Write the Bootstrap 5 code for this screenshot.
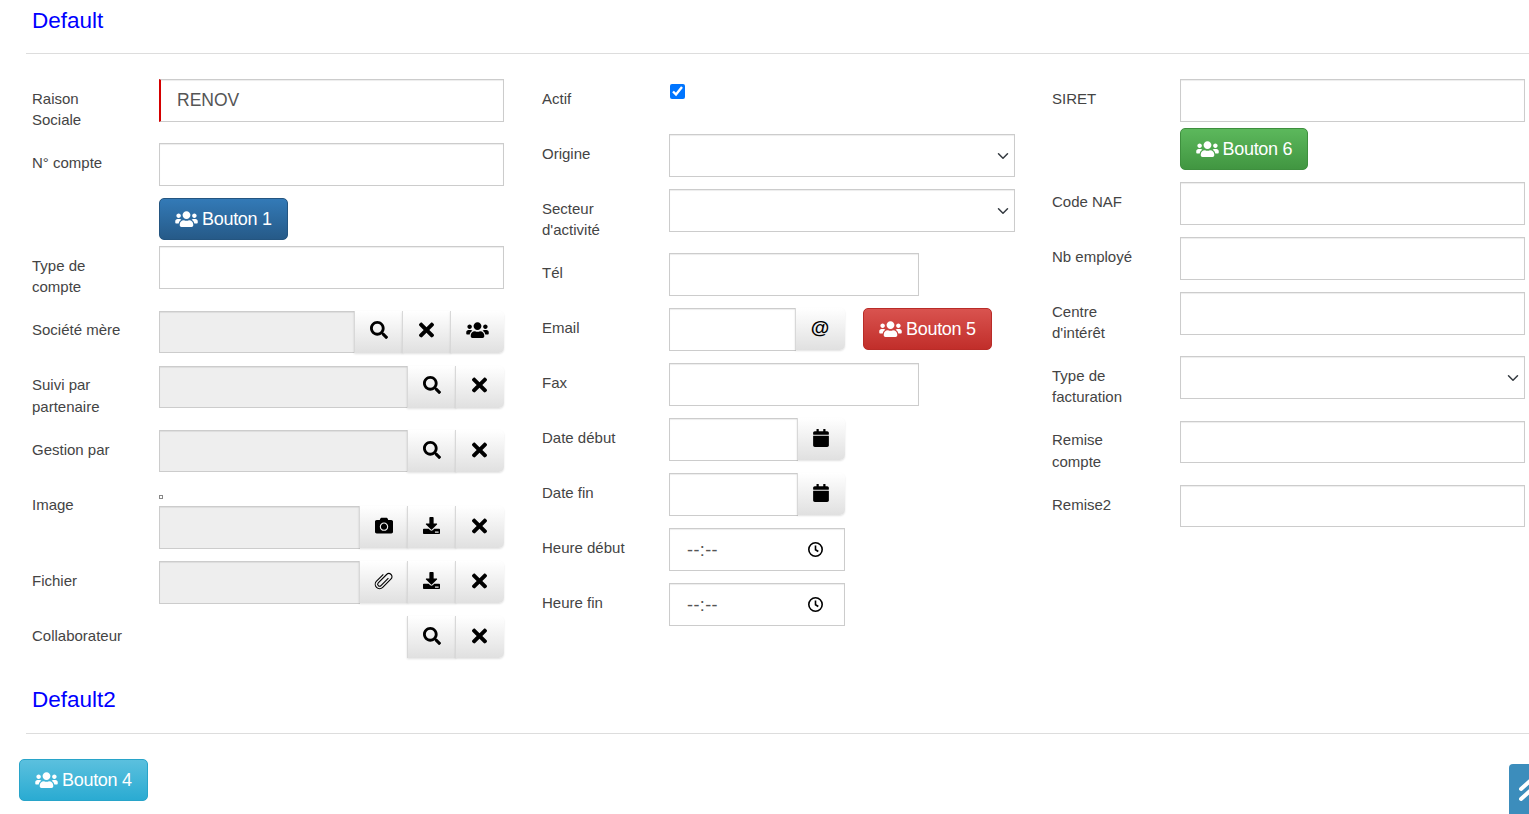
<!DOCTYPE html>
<html lang="fr">
<head>
<meta charset="utf-8">
<title>Default</title>
<link href="https://cdn.jsdelivr.net/npm/bootstrap@5.3.0/dist/css/bootstrap.min.css" rel="stylesheet">
<style>
html,body{height:814px;overflow:hidden;background:#fff}
body{font-family:"Liberation Sans",Arial,sans-serif;font-size:15px;color:#444}
.sec-head{height:54px;margin-left:26px;padding-left:6px;border-bottom:1px solid #ddd;color:#00f;font-size:22.5px;line-height:42px}
.sec-two{height:54px;line-height:40px}
.form-grid{display:grid;grid-template-columns:repeat(3,510px);padding:25px 0 0 32px;height:626px}
.fld{display:grid;grid-template-columns:127px 345px;margin-bottom:12px;min-height:43px}
.col-mid .fld{grid-template-columns:127px 346px}
.col-end .fld{grid-template-columns:128px 345px}
.fld-lbl{padding-top:8.6px;margin-bottom:.94px;line-height:21.43px;width:94px;white-space:normal}
.fld-lbl.no-wrap{white-space:nowrap}
.fld-ctl{min-width:0}
.txt-in{height:43px;border:1px solid #ccc;border-radius:0;box-shadow:inset 0 1px 1px rgba(0,0,0,.075);padding:6px 16px;font-size:17.5px;color:#555;background-color:#fff;font-family:"Liberation Sans",Arial,sans-serif}
.txt-in.req{border-left:2px solid #d40000}
.txt-in.ro,.txt-in.ro:read-only{background:#eee}
.txt-in.low{height:42px}
.w-tel{width:250px}
.input-group>.w-mail{width:127px;flex:none}
.input-group>.w-date{width:129px;flex:none}
.form-select.txt-in{background-position:right 3px center;background-size:16px 12px}
.add-on{width:49px;height:42px;padding:0 1px 3px 0;flex:none;display:flex;align-items:center;justify-content:center;border:0;border-left:1px solid #d8d8d8;border-radius:0;background:linear-gradient(#fff,#e0e0e0);box-shadow:0 1px 2px rgba(0,0,0,.12);color:#000}
.add-on:last-child{border-top-right-radius:5px;border-bottom-right-radius:5px}
.add-on.wide{width:54px}
.add-on.w50{width:50px}
.add-on.w48{width:48px}
.add-on svg{display:block;fill:#000}
.add-on svg.clip-i{fill:none;stroke:#000;stroke-width:1.25}
.at-glyph{font-size:19px;font-weight:700;line-height:1}
.act-btn{height:42px;padding:0 15px;display:inline-flex;flex:none;white-space:nowrap;align-items:center;gap:4px;font-size:18px;letter-spacing:-.3px;color:#fff;border-radius:5px;border:1px solid}
.act-btn:hover{color:#fff}
.act-btn svg{fill:#fff;display:block}
.g-blue{background:linear-gradient(#337ab7,#265a88);border-color:#245580}
.g-red{background:linear-gradient(#d9534f,#c12e2a);border-color:#b92c28}
.g-green{background:linear-gradient(#5cb85c,#419641);border-color:#3e8f3e;padding:0 14.5px}
.g-cyan{background:linear-gradient(#5bc0de,#2aabd2);border-color:#28a4c9}
.btn-gap{margin-top:12px}
.btn-gap-s{margin-top:6px}
.under-blue{margin-bottom:6px}
.mail-row{gap:18px}
.chk{appearance:auto;-webkit-appearance:auto;accent-color:#0075ff;width:15px;height:15px;margin:5px 0 0 1px;border:0;background:none}
.chk:checked{background:none}
.img-dot{display:block;width:4px;height:4px;border:1px solid #888;margin:10px 0 7px}
.time-in{display:flex;align-items:center;justify-content:space-between;width:176px;font-size:18px;letter-spacing:.4px;padding:2px 20px 0 17px}
.time-in svg{fill:none;stroke:#000;stroke-width:1.6;display:block;margin-top:-3px}
.foot-bar{padding:25px 0 0 19px}
.top-tab{position:fixed;left:1509px;top:764px;width:40px;height:50px;background:#3c8dbc;border-top-left-radius:4px}
.top-tab svg{display:block;margin:15px 0 0 10px;stroke:#fff;stroke-width:4;stroke-linecap:round;fill:none}
</style>
</head>
<body>
<svg class="d-none" xmlns="http://www.w3.org/2000/svg">
<symbol id="i-users" viewBox="0 0 640 512"><path d="M96 224c35.3 0 64-28.7 64-64s-28.7-64-64-64-64 28.7-64 64 28.7 64 64 64zm448 0c35.3 0 64-28.7 64-64s-28.7-64-64-64-64 28.7-64 64 28.7 64 64 64zm32 32h-64c-17.6 0-33.5 7.1-45.1 18.6 40.3 22.1 68.9 62 75.1 109.4h66c17.7 0 32-14.3 32-32v-32c0-35.3-28.7-64-64-64zm-256 0c61.9 0 112-50.1 112-112S381.9 32 320 32 208 82.1 208 144s50.1 112 112 112zm76.8 32h-8.3c-20.8 10-43.9 16-68.5 16s-47.6-6-68.5-16h-8.3C179.6 288 128 339.6 128 403.2V432c0 26.5 21.5 48 48 48h288c26.5 0 48-21.5 48-48v-28.8c0-63.6-51.6-115.2-115.2-115.2zm-223.7-13.4C161.5 263.1 145.6 256 128 256H64c-35.3 0-64 28.7-64 64v32c0 17.7 14.3 32 32 32h65.9c6.3-47.4 34.9-87.3 75.2-109.4z"/></symbol>
<symbol id="i-search" viewBox="0 0 512 512"><path d="M505 442.7L405.3 343c-4.5-4.5-10.6-7-17-7H372c27.6-35.3 44-79.7 44-128C416 93.1 322.9 0 208 0S0 93.1 0 208s93.1 208 208 208c48.3 0 92.7-16.4 128-44v16.3c0 6.4 2.5 12.5 7 17l99.7 99.7c9.4 9.4 24.6 9.4 33.9 0l28.3-28.3c9.4-9.4 9.4-24.6.1-34zM208 336c-70.7 0-128-57.2-128-128 0-70.7 57.2-128 128-128 70.7 0 128 57.2 128 128 0 70.7-57.2 128-128 128z"/></symbol>
<symbol id="i-times" viewBox="0 0 352 512"><path d="M242.72 256l100.07-100.07c12.28-12.28 12.28-32.19 0-44.48l-22.24-22.24c-12.28-12.28-32.19-12.28-44.48 0L176 189.28 75.93 89.21c-12.28-12.28-32.19-12.28-44.48 0L9.21 111.45c-12.28 12.28-12.28 32.19 0 44.48L109.28 256 9.21 356.07c-12.28 12.28-12.28 32.19 0 44.48l22.24 22.24c12.28 12.28 32.2 12.28 44.48 0L176 322.72l100.07 100.07c12.28 12.28 32.2 12.28 44.48 0l22.24-22.24c12.28-12.28 12.28-32.19 0-44.48L242.72 256z"/></symbol>
<symbol id="i-down" viewBox="0 0 512 512"><path fill-rule="evenodd" d="M216 0h80c13.3 0 24 10.7 24 24v168h87.7c17.8 0 26.7 21.5 14.1 34.1L269.7 378.3c-7.5 7.5-19.8 7.5-27.3 0L90.1 226.1c-12.6-12.6-3.7-34.1 14.1-34.1H192V24c0-13.3 10.7-24 24-24zM512 376v112c0 13.3-10.7 24-24 24H24c-13.3 0-24-10.7-24-24V376c0-13.3 10.7-24 24-24h146.7l49 49c20.1 20.1 52.5 20.1 72.6 0l49-49H488c13.3 0 24 10.7 24 24zM360 440v32h110v-32z"/></symbol>
<symbol id="i-cam" viewBox="0 14 512 512"><path d="M512 144v288c0 26.5-21.5 48-48 48H48c-26.5 0-48-21.5-48-48V144c0-26.5 21.5-48 48-48h88l12.3-32.9c7-18.7 24.9-31.1 44.9-31.1h125.5c20 0 37.9 12.4 44.9 31.1L376 96h88c26.5 0 48 21.5 48 48zM376 288c0-66.2-53.8-120-120-120s-120 53.8-120 120 53.8 120 120 120 120-53.8 120-120zm-32 0c0 48.5-39.5 88-88 88s-88-39.5-88-88 39.5-88 88-88 88 39.5 88 88z"/><circle cx="256" cy="288" r="48"/></symbol>
<symbol id="i-clip" viewBox="-2 0 24 24"><path transform="rotate(45 9.8 12)" d="M12 6v12a2.2 2.2 0 0 1-4.4 0V4.5a3.6 3.6 0 0 1 7.2 0v13.5a5 5 0 0 1-10 0V7"/></symbol>
<symbol id="i-cal" viewBox="0 0 448 512"><path d="M12 192h424c6.6 0 12 5.4 12 12v260c0 26.5-21.5 48-48 48H48c-26.5 0-48-21.5-48-48V204c0-6.6 5.4-12 12-12zm436-44v-36c0-26.5-21.5-48-48-48h-48V12c0-6.6-5.4-12-12-12h-40c-6.6 0-12 5.4-12 12v52H160V12c0-6.6-5.4-12-12-12h-40c-6.6 0-12 5.4-12 12v52H48C21.5 64 0 85.5 0 112v36c0 6.6 5.4 12 12 12h424c6.6 0 12-5.4 12-12z"/></symbol>
</svg>

<div class="sec-head">Default</div>

<div class="form-grid">
  <div class="col-start">
    <div class="fld"><label class="fld-lbl">Raison Sociale</label><div class="fld-ctl"><input class="form-control txt-in req" value="RENOV"></div></div>
    <div class="fld under-blue"><label class="fld-lbl">N° compte</label><div class="fld-ctl"><input class="form-control txt-in">
      <a class="btn act-btn g-blue btn-gap" href="#"><svg width="23" height="18"><use href="#i-users"/></svg>Bouton 1</a></div></div>
    <div class="fld"><label class="fld-lbl">Type de compte</label><div class="fld-ctl"><input class="form-control txt-in"></div></div>
    <div class="fld"><label class="fld-lbl">Société mère</label><div class="fld-ctl"><div class="input-group flex-nowrap"><input class="form-control txt-in ro low" readonly><button class="btn add-on"><svg width="18" height="18"><use href="#i-search"/></svg></button><button class="btn add-on"><svg width="15" height="22"><use href="#i-times"/></svg></button><button class="btn add-on wide"><svg width="23" height="18"><use href="#i-users"/></svg></button></div></div></div>
    <div class="fld"><label class="fld-lbl">Suivi par partenaire</label><div class="fld-ctl"><div class="input-group flex-nowrap"><input class="form-control txt-in ro low" readonly><button class="btn add-on"><svg width="18" height="18"><use href="#i-search"/></svg></button><button class="btn add-on"><svg width="15" height="22"><use href="#i-times"/></svg></button></div></div></div>
    <div class="fld"><label class="fld-lbl">Gestion par</label><div class="fld-ctl"><div class="input-group flex-nowrap"><input class="form-control txt-in ro low" readonly><button class="btn add-on"><svg width="18" height="18"><use href="#i-search"/></svg></button><button class="btn add-on"><svg width="15" height="22"><use href="#i-times"/></svg></button></div></div></div>
    <div class="fld"><label class="fld-lbl">Image</label><div class="fld-ctl"><span class="img-dot"></span><div class="input-group flex-nowrap"><input class="form-control txt-in ro" readonly><button class="btn add-on"><svg width="18" height="18"><use href="#i-cam"/></svg></button><button class="btn add-on"><svg width="17" height="17"><use href="#i-down"/></svg></button><button class="btn add-on"><svg width="15" height="22"><use href="#i-times"/></svg></button></div></div></div>
    <div class="fld"><label class="fld-lbl">Fichier</label><div class="fld-ctl"><div class="input-group flex-nowrap"><input class="form-control txt-in ro" readonly><button class="btn add-on"><svg class="clip-i" width="21" height="21"><use href="#i-clip"/></svg></button><button class="btn add-on"><svg width="17" height="17"><use href="#i-down"/></svg></button><button class="btn add-on"><svg width="15" height="22"><use href="#i-times"/></svg></button></div></div></div>
    <div class="fld"><label class="fld-lbl no-wrap">Collaborateur</label><div class="fld-ctl"><div class="input-group flex-nowrap justify-content-end"><button class="btn add-on"><svg width="18" height="18"><use href="#i-search"/></svg></button><button class="btn add-on"><svg width="15" height="22"><use href="#i-times"/></svg></button></div></div></div>
  </div>

  <div class="col-mid">
    <div class="fld"><label class="fld-lbl">Actif</label><div class="fld-ctl"><input class="form-check-input chk" type="checkbox" checked></div></div>
    <div class="fld"><label class="fld-lbl">Origine</label><div class="fld-ctl"><select class="form-select txt-in"><option></option></select></div></div>
    <div class="fld"><label class="fld-lbl">Secteur d'activité</label><div class="fld-ctl"><select class="form-select txt-in"><option></option></select></div></div>
    <div class="fld"><label class="fld-lbl">Tél</label><div class="fld-ctl"><input class="form-control txt-in w-tel"></div></div>
    <div class="fld"><label class="fld-lbl">Email</label><div class="fld-ctl d-flex align-items-start mail-row"><div class="input-group flex-nowrap w-auto"><input class="form-control txt-in w-mail"><button class="btn add-on w50"><span class="at-glyph">@</span></button></div><a class="btn act-btn g-red" href="#"><svg width="23" height="18"><use href="#i-users"/></svg>Bouton 5</a></div></div>
    <div class="fld"><label class="fld-lbl">Fax</label><div class="fld-ctl"><input class="form-control txt-in w-tel"></div></div>
    <div class="fld"><label class="fld-lbl">Date début</label><div class="fld-ctl"><div class="input-group flex-nowrap w-auto"><input class="form-control txt-in w-date"><button class="btn add-on w48"><svg width="16" height="18"><use href="#i-cal"/></svg></button></div></div></div>
    <div class="fld"><label class="fld-lbl">Date fin</label><div class="fld-ctl"><div class="input-group flex-nowrap w-auto"><input class="form-control txt-in w-date"><button class="btn add-on w48"><svg width="16" height="18"><use href="#i-cal"/></svg></button></div></div></div>
    <div class="fld"><label class="fld-lbl">Heure début</label><div class="fld-ctl"><div class="form-control txt-in time-in"><span>--:--</span><svg width="17" height="17" viewBox="0 0 17 17"><circle cx="8.5" cy="8.5" r="6.7"/><path d="M8.5 4.5v4.2l2.8 1.8"/></svg></div></div></div>
    <div class="fld"><label class="fld-lbl">Heure fin</label><div class="fld-ctl"><div class="form-control txt-in time-in"><span>--:--</span><svg width="17" height="17" viewBox="0 0 17 17"><circle cx="8.5" cy="8.5" r="6.7"/><path d="M8.5 4.5v4.2l2.8 1.8"/></svg></div></div></div>
  </div>

  <div class="col-end">
    <div class="fld"><label class="fld-lbl">SIRET</label><div class="fld-ctl"><input class="form-control txt-in"><a class="btn act-btn g-green btn-gap-s" href="#"><svg width="23" height="18"><use href="#i-users"/></svg>Bouton 6</a></div></div>
    <div class="fld"><label class="fld-lbl">Code NAF</label><div class="fld-ctl"><input class="form-control txt-in"></div></div>
    <div class="fld"><label class="fld-lbl">Nb employé</label><div class="fld-ctl"><input class="form-control txt-in"></div></div>
    <div class="fld"><label class="fld-lbl">Centre d'intérêt</label><div class="fld-ctl"><input class="form-control txt-in"></div></div>
    <div class="fld"><label class="fld-lbl">Type de facturation</label><div class="fld-ctl"><select class="form-select txt-in"><option></option></select></div></div>
    <div class="fld"><label class="fld-lbl">Remise compte</label><div class="fld-ctl"><input class="form-control txt-in low"></div></div>
    <div class="fld"><label class="fld-lbl">Remise2</label><div class="fld-ctl"><input class="form-control txt-in low"></div></div>
  </div>
</div>

<div class="sec-head sec-two">Default2</div>
<div class="foot-bar"><a class="btn act-btn g-cyan" href="#"><svg width="23" height="18"><use href="#i-users"/></svg>Bouton 4</a></div>
<div class="top-tab"><svg width="24" height="24" viewBox="0 0 24 24"><path d="M2 10l9-8 9 8M2 20l9-8 9 8"/></svg></div>
<script src="https://cdn.jsdelivr.net/npm/bootstrap@5.3.0/dist/js/bootstrap.bundle.min.js"></script>
</body>
</html>
